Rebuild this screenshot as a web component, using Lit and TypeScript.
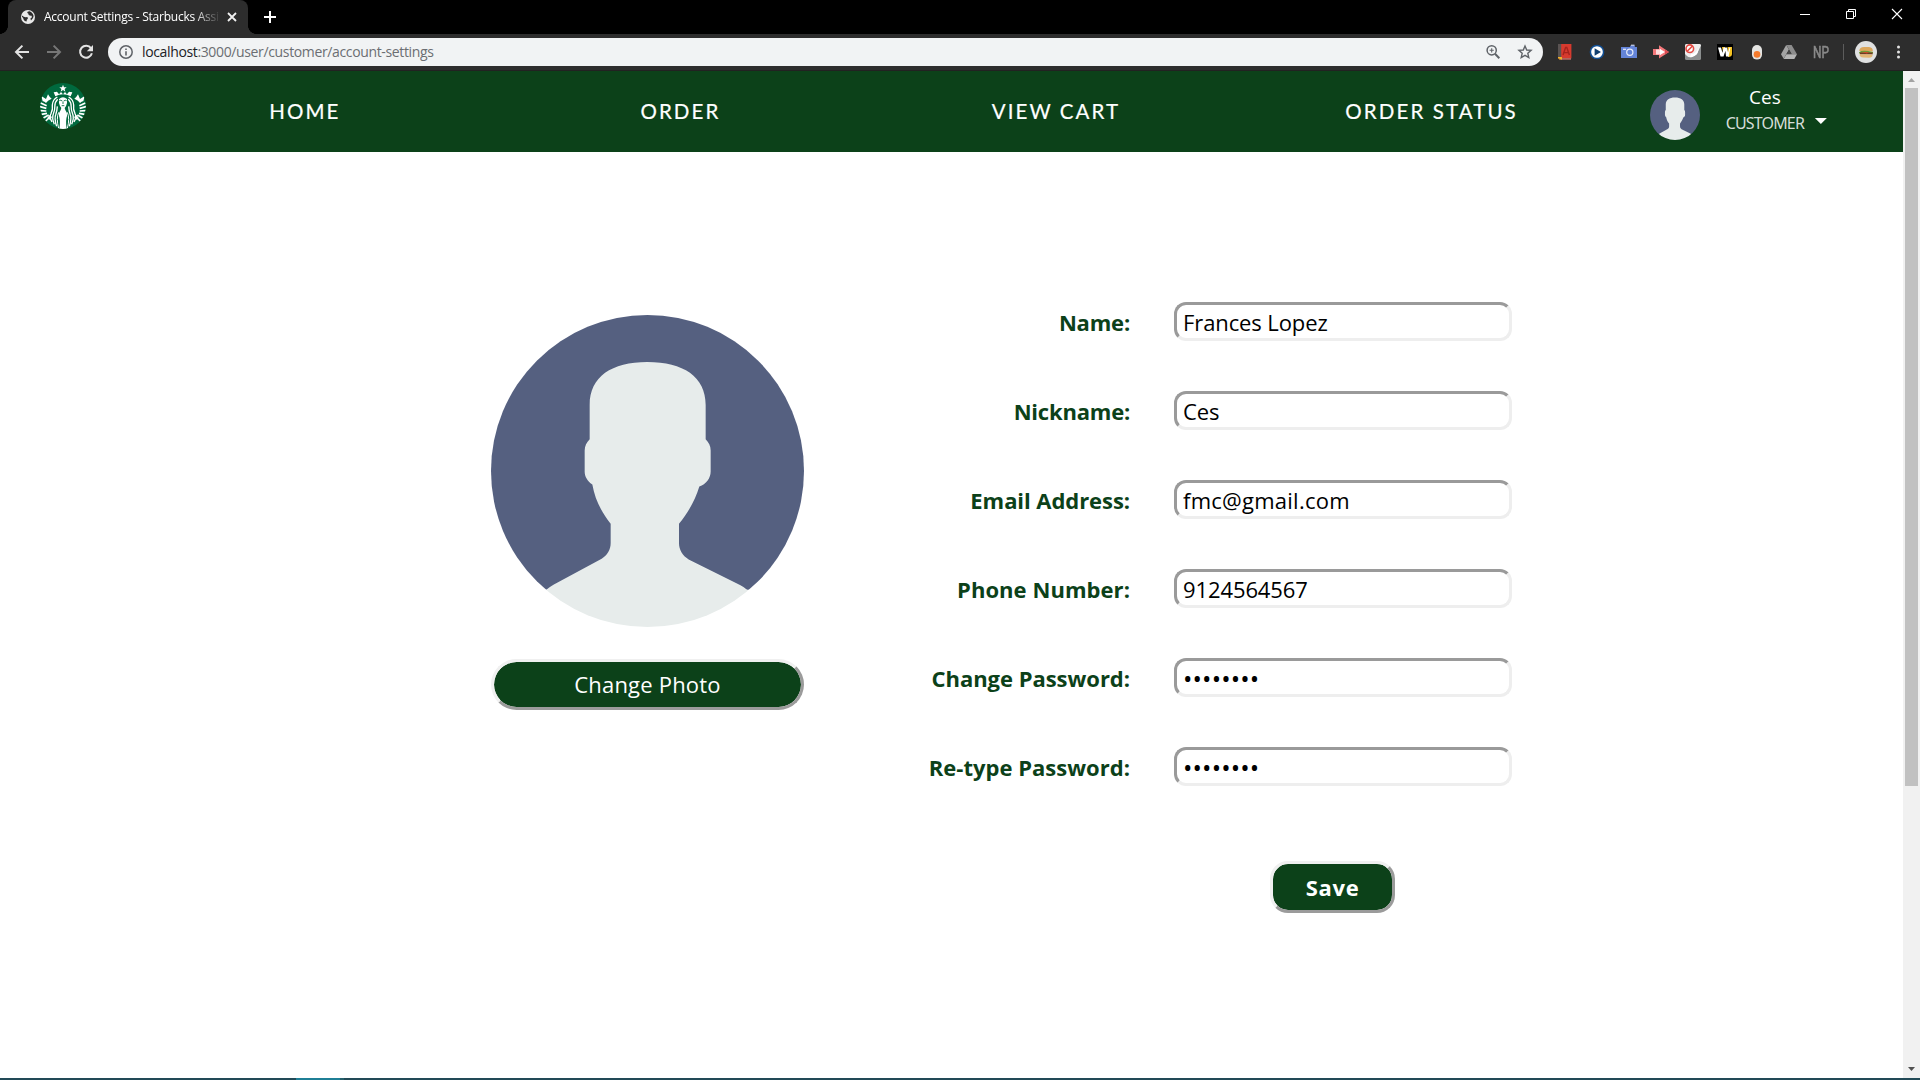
import { LitElement, html, css, svg } from "lit";
import { customElement } from "lit/decorators.js";

/* Square drawing; its container rounds it into a disc. */
const avatar = html`<svg viewBox="93 75 939 937" preserveAspectRatio="none" width="100%" height="100%">
  <path d="M93 75H1032V900H93Z" fill="#556080" />
  <path
    fill="#e7eceb"
    d="M93 1012V1000L261 899C270 890 278 887 290 880L425 807C442 797 452 780 452 760V702C425 668 405 630 397 584C382 574 374 560 374 545V482C374 468 380 457 389 448V345C389 260 455 216 562 216C670 216 737 260 737 345V448C746 457 752 468 752 482V545C752 565 738 584 718 590C706 630 685 668 657 702V760C657 780 667 798 686 809L840 886Q852 892 862 901L1032 1000V1012Z"
  />
</svg>`;

/* Left half of the siren; the right half is the same group mirrored. */
const sirenHalf = svg`
  <path d="M129 72L123 65L117 72L111 64L101 66L106 78Q117 72 129 72Z" />
  <path d="M64 77L78 86L84 72Q88 80 95 85Q82 90 78 98Q72 92 68 93Z" />
  <g fill="none" stroke="#fff" stroke-width="4">
    <path d="M112 80Q98 88 97 104Q99 118 93 130Q87 140 96 155" />
    <path d="M113 87Q104 96 104.500 108Q105 120 100 131Q95 143 103 162" />
    <path d="M112 108Q111 122 107.500 132Q102 145 110 168" />
    <path d="M116 126Q108 145 116 174" stroke-width="3" />
    <path d="M62 98L80 106M60 109L79 114M61 121L79 122M64 132L81 129M70 143L86 134M77 152L88 142" stroke-width="5" />
  </g>
  <path d="M88 134L96 140L90 149L82 143Z" />`;

const siren = html`<svg viewBox="60 38 138 138" width="46" height="46">
  <clipPath id="disc"><circle cx="129" cy="107" r="69" /></clipPath>
  <g clip-path="url(#disc)">
    <rect x="60" y="38" width="138" height="138" fill="#00693e" />
    <g fill="#fff">
      <path d="M129 43L132 51H140L134 56L136 64L129 59L122 64L124 56L118 51H126Z" />
      ${sirenHalf}
      <g transform="translate(258 0) scale(-1 1)">${sirenHalf}</g>
      <path d="M117 86Q129 76 141 86V98Q139 108 134 113L136 119Q142 126 141 137Q136 150 140 176H118Q122 150 117 137Q116 126 122 119L124 113Q119 108 117 98Z" />
    </g>
    <path d="M118 91Q122 88 127 92M140 91Q136 88 131 92M125 106H133M129 94V101" fill="none" stroke="#00693e" stroke-width="2.6" />
  </g>
</svg>`;

const icon = (body: unknown, size = 16) =>
  html`<svg viewBox="0 0 ${size} ${size}" width=${size} height=${size}>${body}</svg>`;

const extensions = [
  svg`<path d="M1 0H14.4V14.4H1Z" fill="#d63a2e"/><path d="M1 0H4.2V14H1Z" fill="#5a5352"/><path d="M2.5 14H14V15.8H2.5Z" fill="#b0645d"/><path d="M6 11L8.6 3.5H9.8L12.4 11M7 8.6H11.4" fill="none" stroke="#a5231d" stroke-width="1.4"/><path d="M1 13H5V16L3.8 15L2.6 16V14.6H1Z" fill="#f0b429"/>`,
  svg`<circle cx="8" cy="8" r="6.6" fill="#fff" stroke="#104e94" stroke-width="1.5"/><path d="M5.6 4.2L12 8L5.6 11.8Z" fill="#123f70"/>`,
  svg`<path d="M0 3H9L9.6 1.3H13.4L14 3H16V14H0Z" fill="#6484d8"/><path d="M10 1.2H13.5" stroke="#dfe6fa"/><circle cx="8.8" cy="8.3" r="3.1" fill="none" stroke="#e8edfb" stroke-width="1.2"/><path d="M2 5.3H5" stroke="#e8edfb" stroke-width="1.2"/>`,
  svg`<path d="M0 5H6V1.200L16 8L6 14.400V11H0Z" fill="#f4777a"/><path d="M7 5L12 8L7 11Z" fill="#fff"/><path d="M3 5.5H8V10.5H3Z" fill="#fff" opacity=".75"/><path d="M12 5.4L16 8L12 10.6Z" fill="#d94a50"/>`,
  svg`<rect width="16" height="16" rx="1.5" fill="#8b8e8e"/><path d="M0 1.500Q0 0 1.500 0H14.500Q16 0 16 1.500L11.500 10.500L7 13Q4 14 2 12L0 10Z" fill="#eeeeee"/><path d="M6 10Q11 10 13.5 4Q14 9 9.5 12Q7 13.5 5 13Z" fill="#fff"/><circle cx="4.8" cy="4.7" r="3.8" fill="#fff" stroke="#e34a42" stroke-width="1.6"/><path d="M2.200 7.3L7.5 2" stroke="#e34a42" stroke-width="1.6"/>`,
  svg`<rect width="16" height="16" fill="#000"/><path d="M10.500 3H15V10Q15 13 11 13Z" fill="#f5c220"/><path d="M5 3H8V9L6 8Z" fill="#f5c220"/><path d="M1 3.500H4L6.500 12.500H3.500ZM6.500 3.500H9.500L6.500 12.500H4.800ZM8 3.500H10L12 12.500H9ZM12.500 3.500H13.500L11.500 12.500H10Z" fill="#fff"/>`,
  svg`<rect x="3" y="1" width="10" height="14.6" rx="5" fill="#e4e4e2"/><circle cx="8" cy="10.4" r="3.3" fill="#f47a2c"/>`,
  svg`<path d="M5.4 1H10.6L16 10.2H10.8Z" fill="#8c8c8c"/><path d="M5.2 1L7.9 5.6L2.7 14.8L0 10.2Z" fill="#a3a3a3"/><path d="M5.4 10.2H16L13.3 14.9H2.7Z" fill="#b5b5b5"/><path d="M8 6L10.3 10H5.7Z" fill="#484848"/>`,
];

interface Field {
  label: string;
  value: string;
  type: string;
  /* Letter spacing in px of the label and of the value. */
  labelTrack: number;
  valueTrack: number;
}

const fields: Field[] = [
  { label: "Name:", value: "Frances Lopez", type: "text", labelTrack: -0.2, valueTrack: -0.1 },
  { label: "Nickname:", value: "Ces", type: "text", labelTrack: -0.2, valueTrack: -0.1 },
  { label: "Email Address:", value: "fmc@gmail.com", type: "text", labelTrack: -0.06, valueTrack: 0.25 },
  { label: "Phone Number:", value: "9124564567", type: "text", labelTrack: 0.06, valueTrack: -0.1 },
  { label: "Change Password:", value: "password", type: "password", labelTrack: -0.03, valueTrack: 0.15 },
  { label: "Re-type Password:", value: "password", type: "password", labelTrack: 0.02, valueTrack: 0.15 },
];

@customElement("browser-chrome")
class BrowserChrome extends LitElement {
  static styles = css`
    :host { display: block; font-family: "Open Sans", "Noto Sans", sans-serif; color: #fff; }
    svg { display: block; flex: none; overflow: visible; }
    .strip { height: 34px; background: #000; display: flex; padding-left: 8px; }
    .tab { position: relative; width: 240px; height: 34px; box-sizing: border-box; padding-left: 12px; background: #2d2d2d; border-radius: 8px 8px 0 0; display: flex; align-items: center; }
    .tab::before, .tab::after { content: ""; position: absolute; bottom: 0; width: 8px; height: 8px; }
    .tab::before { left: -8px; background: radial-gradient(circle at 0 0, #0000 7.6px, #2d2d2d 8px); }
    .tab::after { right: -8px; background: radial-gradient(circle at 100% 0, #0000 7.6px, #2d2d2d 8px); }
    .title { width: 175px; margin: 0 8px; white-space: nowrap; font-size: 12px; letter-spacing: -0.25px; line-height: 18px; -webkit-mask-image: linear-gradient(90deg, #000 150px, #0000 177px); mask-image: linear-gradient(90deg, #000 150px, #0000 177px); }
    .plus { margin: 9px 0 0 14px; }
    .window { margin-left: auto; display: flex; gap: 36px; padding: 9px 18px 0 0; }
    .bar { height: 36px; background: #2d2d2d; border-bottom: 1px solid #222; display: flex; align-items: center; padding-left: 14px; }
    .bar > svg { margin-right: 16px; }
    .omni { width: 1435px; height: 28px; box-sizing: border-box; margin-left: -2px; background: #f1f3f4; border-radius: 14px; display: flex; align-items: center; padding: 0 10px; color: #6b6e72; }
    .url { margin-left: 8px; flex: 1; font-size: 14px; letter-spacing: -0.36px; line-height: 20px; }
    .host { color: #202124; }
    .omni svg + svg { margin-left: 16px; }
    .ext { display: flex; align-items: center; gap: 16px; margin-left: 14px; }
    .np { width: 16px; font: 400 16px "Roboto", sans-serif; color: #8a8a8a; display: flex; justify-content: center; transform: scaleX(0.74); -webkit-text-stroke: 0.6px #8a8a8a; }
    .rule { width: 1px; height: 16px; background: #5c5c5c; margin-left: 14px; }
    .burger { margin-left: 11px; }
    .bar > .burger { margin-right: 20px; }
  `;
  render() {
    return html`
      <div class="strip">
        <div class="tab">
          ${icon(svg`<circle cx="8" cy="8" r="7" fill="#e8e8e8"/><path d="M2 6.600Q4.500 8.800 6.800 8Q8.400 8.200 7.800 9.800Q6.400 10.400 6.600 12.600Q4.400 12.400 3.600 10.400Q3.200 8.400 2 8ZM9.600 2.200Q6.800 2.400 7.400 4Q9 4.600 8.400 5.600Q9.400 7.200 11.200 6.600Q12.400 7.400 11.600 8.800L10.400 9.600L11 11.400Q13.600 9.600 13.600 7Q12.600 3.200 9.600 2.200Z" fill="#2d2d2d"/>`)}
          <span class="title">Account Settings - Starbucks Assi</span>
          ${icon(svg`<path d="M1 1L9 9M9 1L1 9" stroke="#f1f1f1" stroke-width="1.8"/>`, 10)}
        </div>
        <div class="plus">${icon(svg`<path d="M8 2V14M2 8H14" stroke="#fff" stroke-width="2"/>`)}</div>
        <div class="window">
          ${icon(svg`<path d="M0 5.5H10" stroke="#fff"/>`, 10)}
          ${icon(svg`<path d="M.5 2.5H7.5V9.5H.5ZM2.5 2.5V.5H9.5V7.5H7.5" fill="none" stroke="#fff"/>`, 10)}
          ${icon(svg`<path d="M0 0L10 10M10 0L0 10" stroke="#fff" stroke-width="1.1"/>`, 10)}
        </div>
      </div>
      <div class="bar">
        ${icon(svg`<path d="M15 8H2.5M8.4 1.6L2 8L8.4 14.4" fill="none" stroke="#e3e3e3" stroke-width="2"/>`)}
        ${icon(svg`<path d="M1 8H13.5M7.6 1.6L14 8L7.6 14.4" fill="none" stroke="#777" stroke-width="2"/>`)}
        ${icon(svg`<path d="M13 4.2A6 6 0 1 0 13.9 9.3" fill="none" stroke="#e3e3e3" stroke-width="2"/><path d="M15 1V7.2H8.8Z" fill="#e3e3e3"/>`)}
        <div class="omni">
          ${icon(svg`<circle cx="8" cy="8" r="6.2" fill="none" stroke="#5f6368" stroke-width="1.5"/><path d="M8 7.2V11.4M8 4.5V6" stroke="#5f6368" stroke-width="1.6"/>`)}
          <span class="url"><span class="host">localhost</span>:3000/user/customer/account-settings</span>
          ${icon(svg`<circle cx="6.7" cy="6.3" r="4.6" fill="none" stroke="#5f6368" stroke-width="1.5"/><path d="M10 9.8L14.3 14.2" stroke="#5f6368" stroke-width="2"/><path d="M6.7 4.2V8.4M4.6 6.3H8.8" stroke="#5f6368" stroke-width="1.1"/>`)}
          ${icon(svg`<path d="M8 2L9.7 6L14.1 6.4L10.8 9.3L11.8 13.6L8 11.3L4.2 13.6L5.2 9.3L1.9 6.4L6.3 6Z" fill="none" stroke="#5f6368" stroke-width="1.4"/>`)}
        </div>
        <div class="ext">
          ${extensions.map((e) => icon(e))}
          <span class="np">NP</span>
        </div>
        <div class="rule"></div>
        <svg class="burger" viewBox="0 0 22 22" width="22" height="22">
          <circle cx="11" cy="11" r="11" fill="#e0e1e1" />
          <path d="M4.2 10Q4.5 6 9 6H14Q18 6.4 17.8 10.4Z" fill="#dca75c" />
          <path d="M4 11.2Q7 8.6 18 11V12.6H4Z" fill="#6d9a35" />
          <path d="M5 11.6H17.6V13.4H5Z" fill="#6e3a24" />
          <path d="M6 11L14 11.2L12 12.6Z" fill="#d9452b" />
          <path d="M4.6 13.2L17.6 13.4Q17.5 16.6 14 16.8L8 16.4Q4.6 16 4.6 13.4Z" fill="#e3b673" />
        </svg>
        <svg viewBox="0 0 4 16" width="4" height="16" fill="#e3e3e3">
          <circle cx="1.5" cy="3" r="1.5" /><circle cx="1.5" cy="8" r="1.5" /><circle cx="1.5" cy="13" r="1.5" />
        </svg>
      </div>
    `;
  }
}

@customElement("site-nav")
class SiteNav extends LitElement {
  static styles = css`
    :host { display: flex; height: 81px; background: #0c4119; color: #fff; }
    svg { display: block; }
    .logo { width: 76px; padding: 12px 0 0 40px; }
    .links { display: grid; grid-template-columns: repeat(4, 375.6px); align-items: center; justify-items: center; font: 400 20.5px/24px "Lato", sans-serif; letter-spacing: 2.1px; padding-bottom: 1px; }
    .links span { padding-left: 2px; -webkit-text-stroke: 0.2px #fff; }
    .avatar { width: 50px; height: 50px; margin: 19px 0 0 31.5px; border-radius: 50%; overflow: hidden; }
    .who { margin: 14px 0 0 26px; width: 78px; display: flex; flex-direction: column; align-items: center; font-family: "Open Sans", sans-serif; white-space: nowrap; }
    .nick { font-size: 19px; line-height: 24px; }
    .role { font: 400 16px/24px "Noto Sans", sans-serif; letter-spacing: -0.85px; color: #d6ddd8; margin-top: 2px; }
    .caret { margin: 47px 0 0 11px; width: 12px; height: 6px; background: #fff; clip-path: polygon(0 0, 100% 0, 50% 100%); }
  `;
  render() {
    return html`
      <div class="logo">${siren}</div>
      <nav class="links">
        ${["HOME", "ORDER", "VIEW CART", "ORDER STATUS"].map((t) => html`<span>${t}</span>`)}
      </nav>
      <div class="avatar">${avatar}</div>
      <div class="who"><span class="nick">Ces</span><span class="role">CUSTOMER</span></div>
      <div class="caret"></div>
    `;
  }
}

@customElement("account-form")
class AccountForm extends LitElement {
  static styles = css`
    :host { display: flex; align-items: flex-start; font-family: "Open Sans", "Noto Sans", sans-serif; padding: 150px 0 0 491px; }
    svg { display: block; }
    .photo { width: 313px; padding-top: 13px; }
    .portrait { height: 312px; border-radius: 50%; overflow: hidden; }
    button { display: block; box-sizing: border-box; padding: 0; font-family: inherit; color: #fff; background: #0c4119; border: 3px solid; border-color: #f0f0f0 #9b9b9b #9b9b9b #f0f0f0; background-clip: padding-box; }
    .change { margin-top: 32px; padding-bottom: 2px; width: 313px; height: 51px; border-radius: 26px; font-size: 22px; letter-spacing: 0.2px; }
    .rows { width: 708px; display: grid; row-gap: 50px; }
    .row { display: grid; grid-template-columns: 326px 338px; column-gap: 44px; height: 39px; align-items: center; }
    .label { text-align: right; font-weight: 700; font-size: 22px; line-height: 30px; color: #0c4119; white-space: nowrap; }
    input { box-sizing: border-box; width: 338px; height: 39px; margin: 0; padding: 1px 6px 0; border: 3px solid; border-color: #9a9a9a #eee #eee #9a9a9a; border-radius: 12px; outline: none; background: #fff; color: #000; font-family: inherit; font-size: 22px; }
    input[type="password"] { font-size: 25px; }
    .save { margin: 25px 0 0 466px; width: 125px; height: 52px; border-radius: 18px; font-weight: 700; font-size: 22px; letter-spacing: 0.7px; }
  `;
  render() {
    return html`
      <div class="photo">
        <div class="portrait">${avatar}</div>
        <button class="change">Change Photo</button>
      </div>
      <div class="rows">
        ${fields.map(
          (f) => html`<label class="row">
            <span class="label" style="letter-spacing: ${f.labelTrack}px">${f.label}</span
            ><input type=${f.type} .value=${f.value} style="letter-spacing: ${f.valueTrack}px" />
          </label>`,
        )}
        <button class="save">Save</button>
      </div>
    `;
  }
}

@customElement("app-root")
class AppRoot extends LitElement {
  static styles = css`
    :host { display: flex; flex-direction: column; width: 1920px; height: 1080px; overflow: hidden; background: #fff; }
    .view { flex: 1; display: flex; min-height: 0; }
    .page { width: 1903px; }
    .scroll { width: 17px; background: #f1f1f1; display: flex; flex-direction: column; align-items: center; }
    .arrow { width: 7px; height: 4px; }
    .up { margin: 7px 0 6px; background: #a3a3a3; clip-path: polygon(50% 0, 100% 100%, 0 100%); }
    .down { margin: auto 0 7px; background: #505050; clip-path: polygon(0 0, 100% 0, 50% 100%); }
    .thumb { width: 13px; height: 698px; background: #c1c1c1; }
    .taskbar { height: 2px; background: #224a57; display: flex; padding-left: 296px; }
    .active { width: 44px; background: #1f7f96; }
    .active-edge { width: 4px; background: #26606c; }
  `;
  render() {
    return html`
      <browser-chrome></browser-chrome>
      <div class="view">
        <div class="page"><site-nav></site-nav><account-form></account-form></div>
        <div class="scroll">
          <div class="arrow up"></div>
          <div class="thumb"></div>
          <div class="arrow down"></div>
        </div>
      </div>
      <div class="taskbar"><div class="active"></div><div class="active-edge"></div></div>
    `;
  }
}
